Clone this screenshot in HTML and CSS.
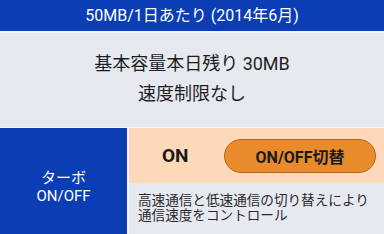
FILE: index.html
```html
<!DOCTYPE html>
<html lang="ja">
<head>
  <meta charset="UTF-8">
  <title>ターボ</title>
  <link rel="stylesheet" href="styles.css">
</head>
<body>
  <!-- Kopfzeile -->
  <div class="title-bar">50MB/1日あたり (2014年6月)</div>

  <!-- Restvolumen -->
  <div class="status">
    <div class="status-line">基本容量本日残り 30MB</div>
    <div class="status-line">速度制限なし</div>
  </div>

  <!-- Turbo-Schalter -->
  <div class="turbo">
    <div class="turbo-label">ターボ<br>ON/OFF</div>
    <div class="turbo-main">
      <div class="turbo-state">
        <span class="state-text">ON</span>
        <button class="toggle-button">ON/OFF切替</button>
      </div>
      <div class="turbo-desc">高速通信と低速通信の切り替えにより<br>通信速度をコントロール</div>
    </div>
  </div>
</body>
</html>
```

FILE: styles.css
```css
body {
  margin: 0;
  width: 384px;
  height: 234px;
  overflow: hidden;
  background-color: #e7e9f1;
  font-family: Roboto, "Noto Sans CJK JP", sans-serif;
}
.title-bar {
  height: 31px;
  line-height: 31px;
  background-color: #0b3db5;
  color: #ffffff;
  font-size: 16px;
  text-align: center;
  border-bottom: 2px solid #f5f6fa;
}
.status {
  height: 94px;
  display: flex;
  flex-direction: column;
  justify-content: center;
  align-items: center;
  gap: 6px;
  padding-bottom: 2px;
  box-sizing: border-box;
  color: #1e1e1e;
  font-size: 18px;
}
.status-line {
  line-height: 24px;
}
.turbo {
  display: grid;
  grid-template-columns: 127px 1fr;
  gap: 2px;
  height: 107px;
  border-top: 1px solid #f5f6fa;
  background-color: #f5f6fa;
  box-sizing: border-box;
}
.turbo-label {
  background-color: #0b3db5;
  color: #ffffff;
  font-size: 15px;
  line-height: 18px;
  display: flex;
  align-items: center;
  justify-content: center;
  text-align: center;
  padding-top: 11px;
}
.turbo-main {
  display: flex;
  flex-direction: column;
  background-color: #e7e9f1;
}
.turbo-state {
  height: 55px;
  background-color: #fdd8b9;
  display: flex;
  align-items: center;
  padding: 0 8px 0 33px;
  box-sizing: border-box;
}
.state-text {
  font-size: 19px;
  font-weight: bold;
  color: #1a1a1a;
  width: 62px;
}
.toggle-button {
  width: 152px;
  height: 34px;
  border: 1.5px solid #b4661c;
  border-radius: 17px;
  background-color: #e98b2b;
  color: #1a1a1a;
  font-family: Roboto, "Noto Sans CJK JP", sans-serif;
  font-size: 16px;
  font-weight: bold;
  padding: 0;
  margin-top: 1px;
}
.turbo-desc {
  padding: 10px 0 0 9px;
  font-size: 13.6px;
  line-height: 15px;
  color: #2a2a2a;
}
```
